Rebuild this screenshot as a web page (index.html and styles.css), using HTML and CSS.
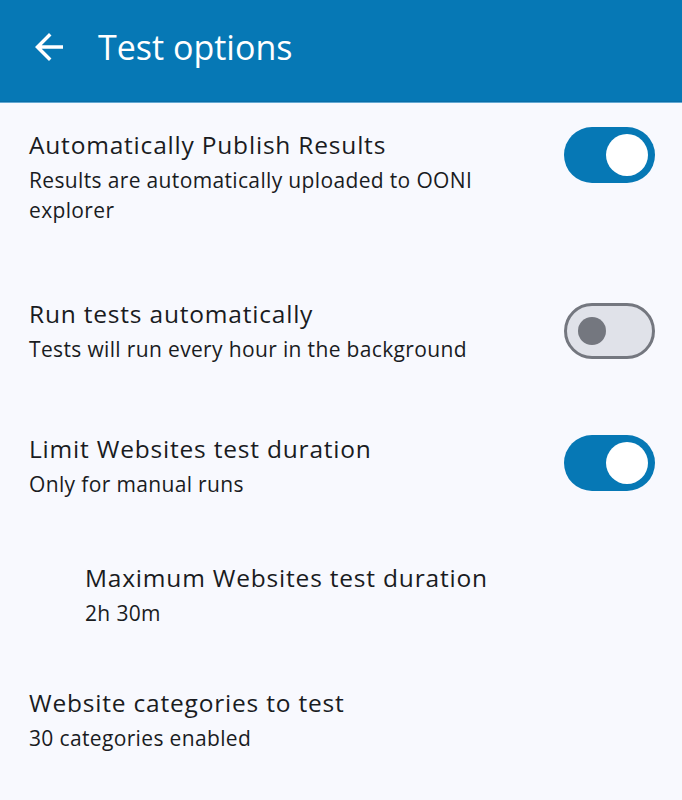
FILE: index.html
```html
<!DOCTYPE html>
<html lang="en">
<head>
<meta charset="utf-8">
<title>Test options</title>
<link rel="stylesheet" href="styles.css">
</head>
<body>
<header class="appbar">
  <button class="back" aria-label="Back">
    <svg viewBox="0 0 24 24" width="42" height="42"><path d="M20 11H7.83l5.59-5.59L12 4l-8 8 8 8 1.41-1.41L7.83 13H20v-2z" fill="#fff"/></svg>
  </button>
  <h1 class="appbar-title">Test options</h1>
</header>
<main class="list">
  <div class="tile tile-1">
    <div class="tile-text">
      <div class="tile-title">Automatically Publish Results</div>
      <div class="tile-sub">Results are automatically uploaded to OONI explorer</div>
    </div>
    <div class="switch on"><span class="thumb"></span></div>
  </div>
  <div class="tile tile-2">
    <div class="tile-text">
      <div class="tile-title">Run tests automatically</div>
      <div class="tile-sub">Tests will run every hour in the background</div>
    </div>
    <div class="switch off"><span class="thumb"></span></div>
  </div>
  <div class="tile tile-3">
    <div class="tile-text">
      <div class="tile-title">Limit Websites test duration</div>
      <div class="tile-sub">Only for manual runs</div>
    </div>
    <div class="switch on"><span class="thumb"></span></div>
  </div>
  <div class="tile tile-4 indented">
    <div class="tile-text">
      <div class="tile-title">Maximum Websites test duration</div>
      <div class="tile-sub">2h 30m</div>
    </div>
  </div>
  <div class="tile tile-5">
    <div class="tile-text">
      <div class="tile-title">Website categories to test</div>
      <div class="tile-sub">30 categories enabled</div>
    </div>
  </div>
</main>
</body>
</html>
```
FILE: styles.css
```css
* { box-sizing: border-box; }
html, body { margin: 0; padding: 0; }
body {
  background: #f8f9fe;
  font-family: "Open Sans", "Noto Sans", sans-serif;
  color: #1a1c1f;
  width: 682px;
  height: 800px;
  overflow: hidden;
}
.appbar {
  height: 102px;
  background: #0678b5;
  display: flex;
  align-items: center;
  padding-left: 28px;
  padding-bottom: 8px;
  box-shadow: 0 1px 0 #62a9d3;
  border-bottom: 1px solid #0a6ea7;
}
.back {
  background: none;
  border: 0;
  padding: 0;
  width: 42px;
  height: 42px;
  display: flex;
}
.appbar-title {
  margin: 0 0 0 28px;
  font-size: 34px;
  font-weight: 400;
  color: #fff;
  line-height: 40px;
}
.list {
  display: flex;
  flex-direction: column;
  gap: 59px;
  padding-top: 25px;
}
.tile {
  display: flex;
  align-items: flex-start;
  padding: 0 27px 0 29px;
  gap: 20px;
}
.tile-text { flex: 1; }
.tile-title {
  font-size: 24.5px;
  line-height: 32px;
  letter-spacing: 0.8px;
  margin-bottom: 4px;
}
.tile-sub {
  font-size: 21px;
  line-height: 30px;
  letter-spacing: 0.35px;
}
.tile-1 .tile-text { margin-top: 2px; }
.tile-1 { padding-bottom: 14px; }
.tile-2 { padding-bottom: 10px; }
.tile-2 .switch { margin-top: 5px; }
.tile-3 { padding-bottom: 4px; }
.tile-3 .switch { margin-top: 2px; }
.indented { padding-left: 85px; }

.switch {
  width: 91px;
  height: 56px;
  border-radius: 28px;
  flex: none;
  display: flex;
  align-items: center;
}
.switch.on {
  background: #0678b5;
  justify-content: flex-end;
  padding-right: 7px;
}
.switch.on .thumb {
  width: 42px;
  height: 42px;
  border-radius: 50%;
  background: #fff;
}
.switch.off {
  background: #e0e2e9;
  border: 3.5px solid #74777f;
  padding-left: 10.5px;
}
.switch.off .thumb {
  width: 28px;
  height: 28px;
  border-radius: 50%;
  background: #74777f;
}
```
